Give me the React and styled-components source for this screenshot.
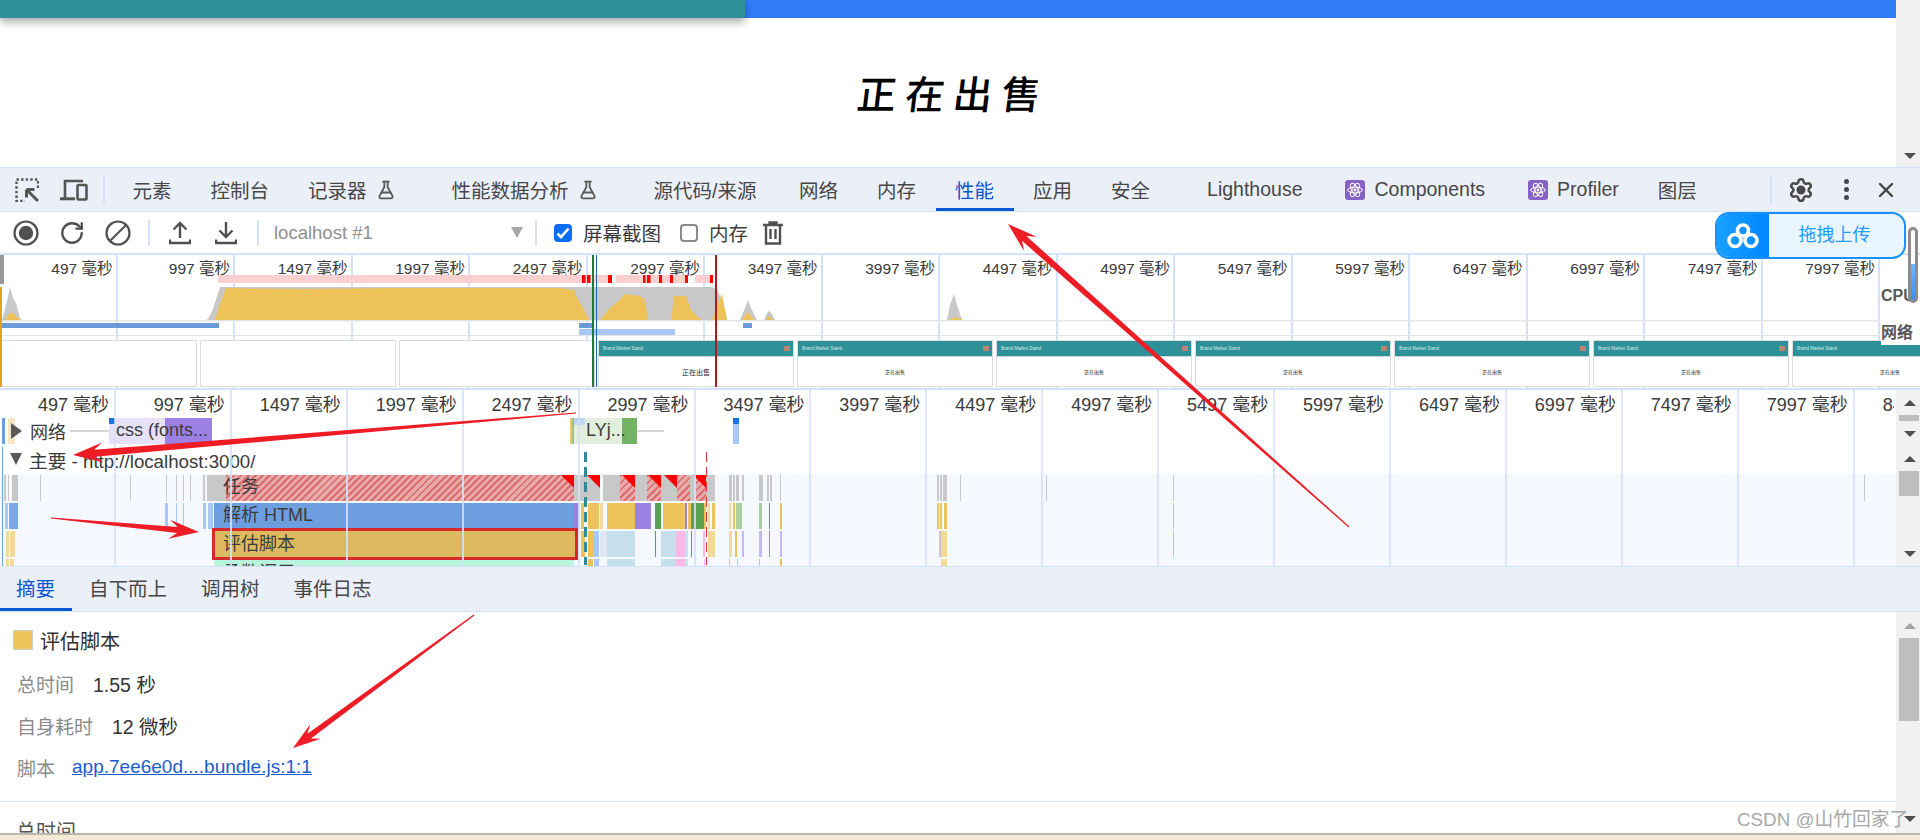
import React from "react";
import styled, { createGlobalStyle } from "styled-components";
import { Settings, FlaskConical, RotateCw, X } from "lucide-react";

const SANS = `"Liberation Sans", "Noto Sans CJK SC", sans-serif`;
const BLUE = "#0b57d0";
const LINE = "#d3e2fb";
const INK = "#474747";

const GlobalStyle = createGlobalStyle`
  html, body { margin: 0; padding: 0; background: #fff; }
  body { font-family: ${SANS}; color: ${INK}; }
  * { box-sizing: border-box; }
`;

const MAIN_TABS = [
  { label: "元素" },
  { label: "控制台" },
  { label: "记录器", flask: true, extra: 17 },
  { label: "性能数据分析", flask: true, extra: 17 },
  { label: "源代码/来源", extra: 3.5 },
  { label: "网络" },
  { label: "内存" },
  { label: "性能", active: true },
  { label: "应用" },
  { label: "安全", extra: 18 },
  { label: "Lighthouse" },
  { label: "Components", react: true },
  { label: "Profiler", react: true },
  { label: "图层" },
];

const OVERVIEW_TICKS = Array.from({ length: 16 }, (_, i) => `${497 + i * 500} 毫秒`);
const TIMELINE_TICKS = Array.from({ length: 17 }, (_, i) => `${497 + i * 500} 毫秒`);

const GREY = "#c8c8c8";
const YEL = "#edc258";
const PALE = "#f3d998";
const PUR = "#9d80e4";
const GRN = "#5da050";
const LGRN = "#a9d09c";
const SKY = "#c5dfeb";
const LBL = "#a8c7f5";
const PNK = "#f8b8e8";
const LAV = "#c4b6ee";
const HATCH = "hatch";

const TASK_BITS = [
  [4, 2, GREY], [8, 1, GREY], [12, 6, GREY], [40, 1, GREY], [130, 1, GREY], [166, 1, GREY], [176, 1, GREY],
  [183, 1, GREY], [190, 1, GREY], [203, 2, GREY], [207, 6, GREY], [213, 13, GREY], [574, 14, GREY],
  [588, 12, GREY], [603, 17, GREY], [620, 15, HATCH], [635, 12, GREY], [647, 14, HATCH], [661, 16, GREY],
  [677, 13, HATCH], [690, 6, GREY], [696, 10, HATCH], [706, 9, GREY], [729, 3, GREY], [733, 2, GREY],
  [736, 3, GREY], [742, 2, GREY], [759, 4, GREY], [767, 2, GREY], [770, 2, GREY], [780, 1, GREY],
  [937, 2, GREY], [940, 2, GREY], [943, 4, GREY], [960, 1, GREY], [1046, 1, GREY], [1173, 1, GREY], [1864, 1, GREY],
];
const TASK_FLAGS = [561, 587, 622, 648, 664, 693];

const PARSE_BITS = [
  [5, 3, LBL], [9, 9, "#7ba7e6"], [165, 3, LBL], [176, 1, LBL], [183, 1, LBL], [203, 3, LBL], [208, 5, LBL],
  [574, 5, PUR], [581, 3, YEL], [588, 11, YEL], [600, 3, PALE], [607, 28, YEL], [635, 16, PUR], [655, 6, GRN],
  [663, 22, YEL], [685, 2, PUR], [688, 3, YEL], [691, 13, GRN], [704, 2, YEL], [708, 2, PALE], [712, 3, YEL],
  [729, 2, PALE], [733, 2, YEL], [736, 6, LGRN], [759, 3, LGRN], [769, 1, GRN], [780, 2, YEL],
  [937, 2, YEL], [940, 2, YEL], [944, 3, YEL], [1173, 1, YEL],
];

const EVAL_BITS = [
  [6, 3, PALE], [10, 5, PALE], [581, 4, YEL], [588, 5, YEL], [593, 6, LBL], [600, 7, "#dfe9f6"], [607, 28, SKY],
  [655, 1, GRN], [661, 15, SKY], [676, 9, PNK], [685, 3, SKY], [691, 1, GRN], [703, 2, PNK], [708, 7, PALE],
  [729, 3, PALE], [735, 2, YEL], [742, 2, LAV], [759, 3, LAV], [769, 1, PUR], [780, 2, LAV],
  [939, 2, GREY], [941, 6, PALE], [1173, 1, YEL],
];

const CALL_BITS = [
  [6, 3, PALE], [10, 4, PALE], [588, 5, YEL], [594, 5, LBL], [607, 28, SKY], [661, 15, SKY], [676, 9, PNK],
  [685, 3, SKY], [704, 1, PNK], [729, 1, YEL], [737, 1, LBL], [759, 1, LBL], [780, 2, YEL], [941, 6, PALE],
];

const App = () => (
  <>
    <GlobalStyle />
    <Page>
      <Site>
        <SiteBody>
          <SiteHeader>
            <SiteHeaderBrand />
            <SiteHeaderRest />
          </SiteHeader>
          <SiteTitle>正在出售</SiteTitle>
        </SiteBody>
        <Scrollbar $pad={8}>
          <ArrowSlot />
          <Arrow $down />
        </Scrollbar>
      </Site>

      <TabBar>
        <TabIcon>
          <InspectIcon />
        </TabIcon>
        <TabIcon $left={21}>
          <DeviceIcon />
        </TabIcon>
        <BarDivider $left={15} $right={8} />
        {MAIN_TABS.map((tab) => (
          <MainTab key={tab.label} $active={tab.active} $extra={tab.extra}>
            {tab.react && <ReactBadge />}
            {tab.label}
            {tab.flask && <FlaskConical size={20} strokeWidth={2.2} color="#5a5a5a" />}
          </MainTab>
        ))}
        <BarTools>
          <BarDivider $left={0} $right={16} />
          <GearWrap>
            <Settings size={26} strokeWidth={2.3} />
          </GearWrap>
          <MenuDots>
            <i />
            <i />
            <i />
          </MenuDots>
          <CloseWrap>
            <X size={24} strokeWidth={2.4} />
          </CloseWrap>
        </BarTools>
      </TabBar>

      <Toolbar>
        <ToolButton>
          <RecordIcon />
        </ToolButton>
        <ToolButton>
          <RotateCw size={26} strokeWidth={2.1} />
        </ToolButton>
        <ToolButton>
          <BlockIcon />
        </ToolButton>
        <ToolDivider $left={7} $right={7} />
        <ToolButton>
          <UploadIcon />
        </ToolButton>
        <ToolButton>
          <DownloadIcon />
        </ToolButton>
        <ToolDivider $left={8} $right={0} />
        <TargetSelect>
          localhost #1
          <SelectCaret />
        </TargetSelect>
        <ToolDivider $left={0} $right={17} />
        <CheckBox $checked>
          <svg width="14" height="12" viewBox="0 0 14 12">
            <path d="M1.5 6.5 5 10l7.5-8.5" fill="none" stroke="#fff" strokeWidth="2.6" />
          </svg>
        </CheckBox>
        <CheckLabel>屏幕截图</CheckLabel>
        <CheckBox />
        <CheckLabel>内存</CheckLabel>
        <TrashIcon />
      </Toolbar>

      <Overview>
        <OverviewGrid>
          {OVERVIEW_TICKS.map((tick) => (
            <OverviewCell key={tick}>{tick}</OverviewCell>
          ))}
        </OverviewGrid>
        <OverviewChart />
        <FilmStrip>
          <Frame />
          <Frame />
          <Frame />
          <ShotFrame size={7} />
          {[1, 2, 3, 4, 5, 6].map((n) => (
            <ShotFrame key={n} size={5} />
          ))}
        </FilmStrip>
        <Marker $x={0} $w={4} $top={0} $bottom={104} $color="#999" />
        <Marker $x={0} $w={2} $top={32} $bottom={1} $color="#e8a020" />
        <Marker $x={592} $w={2} $top={0} $bottom={1} $color="#1c7a3a" />
        <Marker $x={596} $w={1} $top={0} $bottom={1} $color="#1a66c8" />
        <Marker $x={715} $w={2} $top={0} $bottom={1} $color="#b01c1c" />
        <SideLabel $top={29}>CPU</SideLabel>
        <SideLabel $top={66}>网络</SideLabel>
      </Overview>

      <Timeline>
        <TimelineBody>
          <TimelineGrid>
            {TIMELINE_TICKS.map((tick) => (
              <TimelineCell key={tick}>{tick}</TimelineCell>
            ))}
          </TimelineGrid>
          <NetworkTrack>
            <NetBar $x={2} $w={3} $color="#6d9fe0" />
            <NetBar $x={8} $w={7} $color="#f5e6c4" />
            <TrackHead>
              <TriRight />
              网络
            </TrackHead>
            <Whisker $x={70} $w={39} />
            <RequestBar $x={109} $w={103} $fill="#e6e0f8" $rest={PUR} $split={56}>
              <ReqCorner $color="#1a73e8" />
              css (fonts...
            </RequestBar>
            <RequestBar $x={570} $w={67} $fill="#e2efdd" $rest="#74b265" $split={52}>
              <ReqCorner $color="#bcd6f3" $wide />
              <ReqEdge />
              LYj...
            </RequestBar>
            <Whisker $x={637} $w={27} />
            <NetBar $x={733} $w={6} $color="#a9c8f3">
              <ReqCorner $color="#1a73e8" />
            </NetBar>
          </NetworkTrack>
          <MainHead>
            <TriDown />
            主要 - http://localhost:3000/
          </MainHead>
          <Flame>
            <FlameRow>
              <Bits items={TASK_BITS} />
              <FlameBlock $x={226} $w={348} $hatch>任务</FlameBlock>
              {TASK_FLAGS.map((x) => (
                <LongTaskFlag key={x} style={{ left: x }} />
              ))}
            </FlameRow>
            <FlameRow>
              <Bits items={PARSE_BITS} />
              <FlameBlock $x={214} $w={360} $color="#6d9fe0">解析 HTML</FlameBlock>
            </FlameRow>
            <FlameRow>
              <Bits items={EVAL_BITS} />
              <SelectedBlock>评估脚本</SelectedBlock>
            </FlameRow>
            <FlameRow $clip>
              <Bits items={CALL_BITS} />
              <FlameBlock $x={214} $w={360} $color="#b8f5dc" $low>函数调用</FlameBlock>
            </FlameRow>
          </Flame>
          <DashLine $x={584} $w={3} $color="#2e8a9a" />
          <DashLine $x={706} $w={1} $color="#e0343c" />
          <MainEdge />
        </TimelineBody>
        <TimelineBars>
          <Scrollbar $pad={10} $height={57}>
            <Arrow />
            <Track $offset={9}>
              <Thumb $h={6} />
            </Track>
            <Arrow $down />
          </Scrollbar>
          <Scrollbar $pad={9} $height={119}>
            <Arrow />
            <Track $offset={9}>
              <Thumb $h={25} />
            </Track>
            <Arrow $down />
          </Scrollbar>
        </TimelineBars>
      </Timeline>

      <DetailTabs>
        <DetailTab $active>摘要</DetailTab>
        <DetailTab>自下而上</DetailTab>
        <DetailTab>调用树</DetailTab>
        <DetailTab>事件日志</DetailTab>
      </DetailTabs>

      <Detail>
        <DetailBody>
          <EventTitle>
            <Swatch />
            评估脚本
          </EventTitle>
          <InfoRow>
            <InfoLabel>总时间</InfoLabel>
            1.55 秒
          </InfoRow>
          <InfoRow>
            <InfoLabel>自身耗时</InfoLabel>
            12 微秒
          </InfoRow>
          <InfoRow>
            <InfoLabel $tight>脚本</InfoLabel>
            <ScriptLink href="#script">app.7ee6e0d....bundle.js:1:1</ScriptLink>
          </InfoRow>
          <DetailRule />
          <NextHeading>总时间</NextHeading>
        </DetailBody>
        <Scrollbar $pad={11}>
          <Arrow $faded />
          <Track $offset={9}>
            <Thumb $h={83} />
          </Track>
          <Arrow $down />
        </Scrollbar>
      </Detail>

      <WindowEdge />

      <UploadBadge>
        <UploadLogo>
          <svg width="32" height="26" viewBox="0 0 32 26">
            <g fill="none" stroke="#fff" strokeWidth="3.6">
              <circle cx="16" cy="7.5" r="5.5" />
              <circle cx="8" cy="17.5" r="6" />
              <circle cx="24" cy="17.5" r="6" />
            </g>
          </svg>
        </UploadLogo>
        <UploadText>拖拽上传</UploadText>
      </UploadBadge>
      <SidePill />
      <Annotations />
      <Watermark>CSDN @山竹回家了</Watermark>
    </Page>
  </>
);

export default App;

const Bits = ({ items }) =>
  items.map(([x, w, color]) =>
    color === HATCH ? (
      <HatchBit key={x} style={{ left: x, width: w }} />
    ) : (
      <Bit key={x} style={{ left: x, width: w, background: color }} />
    ),
  );

const InspectIcon = () => (
  <svg width="24" height="24" viewBox="0 0 24 24" fill="none" stroke="#555">
    <path d="M23 10V1.5H1.5V23H10" strokeWidth="2.4" strokeDasharray="2.4 2.2" />
    <path d="M11.5 11.5 23 23M11.5 11.5h8M11.5 11.5v8" strokeWidth="3" />
  </svg>
);

const DeviceIcon = () => (
  <svg width="28" height="22" viewBox="0 0 28 22" fill="none" stroke="#555">
    <path d="M5 20V2h18" strokeWidth="2.6" />
    <path d="M0 19.8h15" strokeWidth="3" />
    <rect x="17.5" y="6" width="9" height="14.5" rx="1" strokeWidth="2.6" />
  </svg>
);

const RecordIcon = () => (
  <svg width="26" height="26" viewBox="0 0 26 26">
    <circle cx="13" cy="13" r="11.5" fill="none" stroke="#505050" strokeWidth="2.2" />
    <circle cx="13" cy="13" r="7.2" fill="#505050" />
  </svg>
);

const BlockIcon = () => (
  <svg width="26" height="26" viewBox="0 0 26 26" fill="none" stroke="#505050" strokeWidth="2.2">
    <circle cx="13" cy="13" r="11.5" />
    <path d="M5 21 21 5" />
  </svg>
);

const UploadIcon = () => (
  <svg width="22" height="24" viewBox="0 0 22 24" fill="none" stroke="#505050" strokeWidth="2.4">
    <path d="M11 17V2M4.5 8.5 11 2l6.5 6.5M1 18.5V22h20v-3.5" />
  </svg>
);

const DownloadIcon = () => (
  <svg width="22" height="24" viewBox="0 0 22 24" fill="none" stroke="#505050" strokeWidth="2.4">
    <path d="M11 1v15M4.5 9.5 11 16l6.5-6.5M1 18.5V22h20v-3.5" />
  </svg>
);

const TrashIcon = () => (
  <TrashWrap>
    <svg width="20" height="24" viewBox="0 0 20 24" fill="none" stroke="#505050" strokeWidth="2.4">
      <path d="M0 4h20M6.5 4V1.5h7V4M3 4v18.5h14V4M7.5 8v10M12.5 8v10" />
    </svg>
  </TrashWrap>
);

const ReactBadge = () => (
  <BadgeBox>
    <svg width="16" height="16" viewBox="-12 -12 24 24" fill="none" stroke="#fff" strokeWidth="1.5">
      <circle r="2.2" fill="#fff" stroke="none" />
      <ellipse rx="11" ry="4.4" />
      <ellipse rx="11" ry="4.4" transform="rotate(60)" />
      <ellipse rx="11" ry="4.4" transform="rotate(120)" />
    </svg>
  </BadgeBox>
);

const OverviewChart = () => (
  <ChartSvg viewBox="0 275 1920 65" width="1920" height="65">
    <g fill="#f9cfcf">
      <rect x="218" y="275" width="373" height="8" />
      <rect x="594" y="275" width="18" height="8" />
      <rect x="616" y="275" width="69" height="8" />
      <rect x="695" y="275" width="18" height="8" />
    </g>
    <g fill="#f00">
      {[[582, 3.5], [587, 3.5], [608, 4], [643, 2.5], [647, 3.5], [659, 3], [670, 3], [685, 3], [710, 3]].map(([x, w]) => (
        <rect key={x} x={x} y="275" width={w} height="8" />
      ))}
    </g>
    <g fill="#c8c8c8">
      <polygon points="2,320 6,305 10,287 13,298 16,303 20,318 22,320" />
      <polygon points="207,320 212,312 220,287 712,287 717,290 722,300 727,320" />
      <polygon points="740,320 745,308 748,300 751,308 757,320" />
      <polygon points="764,320 767,313 769,311 772,314 775,320" />
      <polygon points="947,320 950,305 954,294 957,305 962,320" />
    </g>
    <g fill="#edc258">
      <polygon points="5,320 9,314 13,313 20,320" />
      <polygon points="215,320 220,304 226,288 300,289 400,288 500,288 560,288 574,290 578,300 582,306 589,320" />
      <polygon points="600,320 610,308 620,300 624,294 640,296 645,300 648,320" />
      <polygon points="671,320 674,296 686,296 691,310 699,318 701,320" />
      <polygon points="712,320 717,305 722,294 727,320" />
      <polygon points="742,320 748,312 754,320" />
      <polygon points="766,320 769,316 773,320" />
      <polygon points="949,320 955,317 964,320" />
    </g>
    <rect x="0" y="320" width="1880" height="1.5" fill="#e4e4e4" />
    <rect x="0" y="335" width="1880" height="1" fill="#e4e4e4" />
    <g fill="#6b9ad8">
      <rect x="2" y="323" width="217" height="5" />
      <rect x="579" y="323" width="14" height="5" />
      <rect x="743" y="323" width="9" height="5" />
    </g>
    <rect x="579" y="329" width="96" height="6" fill="#a8c7f5" />
  </ChartSvg>
);

const ShotFrame = ({ size }) => (
  <Frame>
    <ShotHeader>
      Brand Market Stand
      <ShotBadge />
    </ShotHeader>
    <ShotText $size={size}>正在出售</ShotText>
  </Frame>
);

const arrowPoints = ([x1, y1], [x2, y2], headL, headW, neckW) => {
  const len = Math.hypot(x2 - x1, y2 - y1);
  const dx = (x2 - x1) / len;
  const dy = (y2 - y1) / len;
  const at = (back, side) => `${x2 - dx * back - dy * side},${y2 - dy * back + dx * side}`;
  return [
    at(len, 0.6), at(headL * 0.72, neckW / 2), at(headL, headW / 2), at(0, 0),
    at(headL, -headW / 2), at(headL * 0.72, -neckW / 2), at(len, -0.6),
  ].join(" ");
};

const Annotations = () => (
  <AnnotationLayer width="1920" height="840" viewBox="0 0 1920 840">
    <g fill="#ee1c25">
      <polygon points={arrowPoints([1349, 527], [1008, 224], 30, 19, 6.5)} />
      <polygon points={arrowPoints([576, 413], [73, 455], 30, 20, 7)} />
      <polygon points={arrowPoints([51, 518], [199, 532], 30, 19, 6)} />
      <polygon points={arrowPoints([474, 615], [293, 748], 28, 18, 6)} />
    </g>
  </AnnotationLayer>
);

const Page = styled.div`
  position: relative;
  width: 1920px;
  height: 840px;
  overflow: hidden;
  display: flex;
  flex-direction: column;
`;

const Site = styled.div`
  height: 167px;
  display: flex;
  flex: none;
`;

const SiteBody = styled.div`
  flex: 1;
  position: relative;
`;

const SiteHeader = styled.div`
  display: flex;
  height: 18px;
`;

const SiteHeaderBrand = styled.div`
  width: 745px;
  background: #2e9199;
  box-shadow: 0 4px 8px rgba(0, 0, 0, 0.35);
  position: relative;
  z-index: 1;
`;

const SiteHeaderRest = styled.div`
  flex: 1;
  background: #2f7cf6;
`;

const SiteTitle = styled.h1`
  margin: 51px 0 0 855px;
  font: 500 39px/46px "Noto Sans CJK SC", sans-serif;
  letter-spacing: 9px;
  color: #000;
  transform: skewX(-7deg);
  transform-origin: left bottom;
  white-space: nowrap;
`;

const Scrollbar = styled.div`
  width: 24px;
  flex: none;
  height: ${(p) => (p.$height ? `${p.$height}px` : "auto")};
  background: #f1f1f1;
  display: flex;
  flex-direction: column;
  align-items: center;
  padding: ${(p) => p.$pad}px 0;
`;

const ArrowSlot = styled.div`
  flex: 1;
`;

const Arrow = styled.div`
  flex: none;
  width: 0;
  height: 0;
  margin-left: 3px;
  border-left: 6px solid transparent;
  border-right: 6px solid transparent;
  ${(p) =>
    p.$down
      ? `border-top: 6px solid #505050;`
      : `border-bottom: 6px solid ${p.$faded ? "#a3a3a3" : "#505050"};`}
`;

const Track = styled.div`
  flex: 1;
  align-self: stretch;
  padding: ${(p) => p.$offset}px 1px 0 3px;
`;

const Thumb = styled.div`
  height: ${(p) => p.$h}px;
  background: #bebebe;
`;

const TabBar = styled.div`
  height: 45px;
  flex: none;
  display: flex;
  align-items: center;
  background: #ebeff7;
  border-top: 1px solid #d3e2fb;
  border-bottom: 1px solid #d3e2fb;
  padding-left: 15px;
`;

const TabIcon = styled.div`
  display: flex;
  margin-left: ${(p) => p.$left || 0}px;
`;

const BarDivider = styled.div`
  width: 2px;
  height: 27px;
  background: ${LINE};
  margin: 0 ${(p) => p.$right}px 0 ${(p) => p.$left}px;
`;

const MainTab = styled.div`
  height: 43px;
  display: flex;
  align-items: center;
  gap: 9px;
  padding: 3px 19.5px 0;
  margin-right: ${(p) => p.$extra || 0}px;
  font-size: 19.5px;
  white-space: nowrap;
  color: ${(p) => (p.$active ? BLUE : INK)};
  border-bottom: 3px solid ${(p) => (p.$active ? BLUE : "transparent")};
`;

const BadgeBox = styled.span`
  width: 20px;
  height: 20px;
  margin-left: 4px;
  border-radius: 3px;
  background: #8561c5;
  display: flex;
  align-items: center;
  justify-content: center;
`;

const BarTools = styled.div`
  margin-left: auto;
  width: 150px;
  flex: none;
  display: flex;
  align-items: center;
  color: ${INK};
`;

const GearWrap = styled.div`
  display: flex;
  svg circle {
    fill: currentColor;
  }
`;

const MenuDots = styled.div`
  margin-left: 30px;
  display: flex;
  flex-direction: column;
  gap: 3px;
  i {
    width: 5px;
    height: 5px;
    border-radius: 50%;
    background: ${INK};
  }
`;

const CloseWrap = styled.div`
  margin-left: 25px;
  display: flex;
`;

const Toolbar = styled.div`
  height: 43px;
  flex: none;
  display: flex;
  align-items: center;
  padding-left: 3px;
  background: #fff;
  border-bottom: 2px solid #d3e2fb;
  color: #505050;
  font-size: 19px;
`;

const ToolButton = styled.div`
  width: 46px;
  display: flex;
  justify-content: center;
`;

const ToolDivider = styled.div`
  width: 2px;
  height: 26px;
  background: ${LINE};
  margin: 0 ${(p) => p.$right}px 0 ${(p) => p.$left}px;
`;

const TargetSelect = styled.div`
  width: 276px;
  padding-left: 15px;
  display: flex;
  align-items: center;
  justify-content: space-between;
  padding-right: 12px;
  color: #8f8f8f;
  font-size: 18.5px;
`;

const SelectCaret = styled.span`
  width: 0;
  height: 0;
  border-left: 6.5px solid transparent;
  border-right: 6.5px solid transparent;
  border-top: 11px solid #a8a8a8;
`;

const CheckBox = styled.span`
  width: 18px;
  height: 18px;
  border-radius: 4px;
  display: flex;
  align-items: center;
  justify-content: center;
  background: ${(p) => (p.$checked ? "#0b6ef5" : "#fff")};
  border: ${(p) => (p.$checked ? "none" : "2px solid #8a8a8a")};
`;

const CheckLabel = styled.span`
  margin: 0 19px 0 11px;
  font-size: 19.5px;
  color: #3c3c3c;
`;

const TrashWrap = styled.span`
  display: flex;
  margin-left: -4px;
`;

const Overview = styled.div`
  position: relative;
  height: 135px;
  flex: none;
  overflow: hidden;
  border-bottom: 2px solid #d3e2fb;
  background: #fff;
`;

const OverviewGrid = styled.div`
  position: absolute;
  inset: 0;
  display: flex;
`;

const OverviewCell = styled.div`
  flex: 0 0 117.5px;
  border-right: 2px solid ${LINE};
  padding: 3px 3px 0 0;
  text-align: right;
  font-size: 15.5px;
  line-height: 22px;
  color: #3a3a3a;
  white-space: nowrap;
`;

const ChartSvg = styled.svg`
  display: block;
  position: relative;
  margin-top: 20px;
`;

const FilmStrip = styled.div`
  position: relative;
  display: flex;
  gap: 3px;
  padding-left: 1px;
  height: 47px;
`;

const Frame = styled.div`
  flex: 0 0 196px;
  border: 1px solid #dcdcdc;
  border-radius: 1px;
  background: #fff;
  overflow: hidden;
  display: flex;
  flex-direction: column;
`;

const ShotHeader = styled.div`
  height: 16px;
  flex: none;
  display: flex;
  align-items: center;
  justify-content: space-between;
  padding: 0 3px 0 4px;
  background: #2e9199;
  color: #d9ecec;
  font-size: 4.5px;
  border-bottom: 1px solid #c9dcdc;
`;

const ShotBadge = styled.span`
  width: 6px;
  height: 5px;
  background: #b98470;
`;

const ShotText = styled.div`
  flex: 1;
  display: flex;
  align-items: center;
  justify-content: center;
  color: #222;
  font: ${(p) => p.$size}px "Noto Sans CJK SC", sans-serif;
`;

const Marker = styled.div`
  position: absolute;
  left: ${(p) => p.$x}px;
  width: ${(p) => p.$w}px;
  top: ${(p) => p.$top}px;
  bottom: ${(p) => p.$bottom}px;
  background: ${(p) => p.$color};
`;

const SideLabel = styled.div`
  position: absolute;
  left: 1881px;
  top: ${(p) => p.$top}px;
  width: 39px;
  height: 24px;
  line-height: 24px;
  background: #fff;
  color: #585858;
  font-size: 16px;
  font-weight: 700;
`;

const Timeline = styled.div`
  height: 176px;
  flex: none;
  display: flex;
`;

const TimelineBody = styled.div`
  position: relative;
  flex: 1;
  overflow: hidden;
  padding-top: 25px;
  background: #fff;
`;

const TimelineBars = styled.div`
  display: flex;
  flex-direction: column;
  background: #f1f1f1;
`;

const TimelineGrid = styled.div`
  position: absolute;
  inset: 0 2px 0 0;
  display: flex;
  overflow: hidden;
  z-index: 3;
  pointer-events: none;
`;

const TimelineCell = styled.div`
  flex: 0 0 115.93px;
  border-right: 2px solid rgba(211, 226, 251, 0.85);
  padding: 3px 5px 0 0;
  display: flex;
  justify-content: flex-end;
  font-size: 18px;
  line-height: 24px;
  color: #3a3a3a;
  white-space: nowrap;
`;

const NetworkTrack = styled.div`
  position: relative;
  height: 32px;
  font-size: 18px;
`;

const TrackHead = styled.div`
  position: absolute;
  left: 11px;
  top: 3px;
  display: flex;
  align-items: center;
  gap: 8px;
  height: 26px;
  color: #3a3a3a;
`;

const TriRight = styled.span`
  width: 0;
  height: 0;
  border-top: 8px solid transparent;
  border-bottom: 8px solid transparent;
  border-left: 11px solid #5a5a5a;
`;

const TriDown = styled.span`
  width: 0;
  height: 0;
  border-left: 6.5px solid transparent;
  border-right: 6.5px solid transparent;
  border-top: 12px solid #5a5a5a;
`;

const NetBar = styled.div`
  position: absolute;
  top: 3px;
  left: ${(p) => p.$x}px;
  width: ${(p) => p.$w}px;
  height: 26px;
  background: ${(p) => p.$color};
`;

const Whisker = styled.div`
  position: absolute;
  top: 15px;
  left: ${(p) => p.$x}px;
  width: ${(p) => p.$w}px;
  height: 2px;
  background: #d6d6d6;
`;

const RequestBar = styled.div`
  position: absolute;
  top: 3px;
  left: ${(p) => p.$x}px;
  width: ${(p) => p.$w}px;
  height: 26px;
  padding-left: ${(p) => (p.$x > 300 ? 16 : 7)}px;
  line-height: 25px;
  color: #3d3d3d;
  white-space: nowrap;
  overflow: hidden;
  background: linear-gradient(
    90deg,
    ${(p) => p.$fill} ${(p) => p.$split}px,
    ${(p) => p.$rest} ${(p) => p.$split}px
  );
`;

const ReqCorner = styled.span`
  position: absolute;
  left: ${(p) => (p.$wide ? 3 : 0)}px;
  top: 0;
  width: ${(p) => (p.$wide ? 12 : 6)}px;
  height: ${(p) => (p.$wide ? 7 : 6)}px;
  background: ${(p) => p.$color};
`;

const ReqEdge = styled.span`
  position: absolute;
  left: 0;
  top: 0;
  bottom: 0;
  width: 4px;
  background: linear-gradient(90deg, #e8c877 0 2px, #9cc27f 2px);
`;

const MainHead = styled.div`
  height: 27px;
  display: flex;
  align-items: center;
  gap: 7px;
  padding: 0 0 3px 10px;
  font-size: 18.7px;
  color: #3a3a3a;
`;

const Flame = styled.div`
  height: 92px;
  padding-top: 1px;
  overflow: hidden;
  background: #f5f8fe;
`;

const FlameRow = styled.div`
  position: relative;
  height: ${(p) => (p.$clip ? 7 : 26)}px;
  margin-bottom: 2px;
  overflow: ${(p) => (p.$clip ? "hidden" : "visible")};
`;

const Bit = styled.span`
  position: absolute;
  top: 0;
  bottom: 0;
`;

const hatchBg = `repeating-linear-gradient(
  135deg,
  #dd6c6c 0 2px,
  #e6aaaa 2px 5px
)`;

const HatchBit = styled(Bit)`
  background: ${hatchBg};
`;

const FlameBlock = styled.div`
  position: absolute;
  top: 0;
  left: ${(p) => p.$x}px;
  width: ${(p) => p.$w}px;
  height: 26px;
  padding-left: ${(p) => (p.$hatch ? 0 : 9)}px;
  text-indent: ${(p) => (p.$hatch ? -3 : 0)}px;
  background: ${(p) => (p.$hatch ? hatchBg : p.$color)};
  color: #3c3c3c;
  font-size: 18px;
  line-height: ${(p) => (p.$low ? 29 : 25)}px;
  white-space: nowrap;
`;

const LongTaskFlag = styled.span`
  position: absolute;
  top: 0;
  width: 13px;
  height: 13px;
  background: #f00;
  clip-path: polygon(0 0, 100% 0, 100% 100%);
`;

const SelectedBlock = styled.div`
  position: absolute;
  left: 212px;
  top: -3px;
  width: 366px;
  height: 32px;
  border: 3px solid #d42a2a;
  background: #ddb95f;
  padding-left: 8px;
  color: #3c3c3c;
  font-size: 18px;
  line-height: 26px;
  z-index: 2;
`;

const DashLine = styled.div`
  position: absolute;
  left: ${(p) => p.$x}px;
  width: ${(p) => p.$w}px;
  top: 62px;
  bottom: 1px;
  z-index: 2;
  background: repeating-linear-gradient(
    180deg,
    ${(p) => p.$color} 0 10px,
    transparent 10px 15px
  );
`;

const MainEdge = styled.div`
  position: absolute;
  left: 2px;
  top: 57px;
  bottom: 0;
  width: 1px;
  background: #6d9fe0;
`;

const DetailTabs = styled.div`
  height: 46px;
  flex: none;
  display: flex;
  background: #ebeff7;
  border-top: 1px solid #d3e2fb;
  border-bottom: 1px solid #d3e2fb;
`;

const DetailTab = styled.div`
  padding: 2px 17px 0;
  font-size: 19.5px;
  line-height: 40px;
  color: ${(p) => (p.$active ? BLUE : INK)};
  border-bottom: 3px solid ${(p) => (p.$active ? BLUE : "transparent")};
  &:first-child {
    padding-left: 16px;
  }
`;

const Detail = styled.div`
  height: 221px;
  flex: none;
  display: flex;
`;

const DetailBody = styled.div`
  flex: 1;
  overflow: hidden;
  padding-top: 18px;
`;

const EventTitle = styled.div`
  display: flex;
  align-items: center;
  gap: 7px;
  height: 20px;
  padding-left: 13px;
  margin-bottom: 12px;
  font-size: 20px;
  color: #303030;
`;

const Swatch = styled.span`
  width: 20px;
  height: 20px;
  background: ${YEL};
  border: 1px solid #ccc;
`;

const InfoRow = styled.div`
  height: 42px;
  display: flex;
  align-items: center;
  padding-left: 17px;
  font-size: 19.5px;
  color: #333;
`;

const InfoLabel = styled.span`
  margin-right: ${(p) => (p.$tight ? 17 : 19)}px;
  font-size: 19px;
  color: #8a8a8a;
`;

const ScriptLink = styled.a`
  color: #1a5ccc;
  text-decoration: underline;
  font-size: 19px;
`;

const DetailRule = styled.div`
  height: 1px;
  background: #d3e2fb;
  margin-top: 13px;
`;

const NextHeading = styled.div`
  padding-left: 16px;
  margin-top: 17px;
  font-size: 20px;
  line-height: 26px;
  color: #555;
`;

const WindowEdge = styled.div`
  height: 7px;
  flex: none;
  background: linear-gradient(180deg, #bcb8a8 0 2px, #f2ead6 2px);
`;

const UploadBadge = styled.div`
  position: absolute;
  left: 1715px;
  top: 212px;
  width: 191px;
  height: 47px;
  display: flex;
  border: 2px solid #1890ff;
  border-radius: 14px;
  overflow: hidden;
  background: #eaf6ff;
`;

const UploadLogo = styled.div`
  width: 52px;
  display: flex;
  align-items: center;
  justify-content: center;
  background: linear-gradient(90deg, #18a0ff, #0086ff);
`;

const UploadText = styled.div`
  flex: 1;
  text-align: center;
  line-height: 43px;
  font-size: 18px;
  color: #1e9bff;
  padding-right: 4px;
`;

const SidePill = styled.div`
  position: absolute;
  left: 1908px;
  top: 227px;
  width: 10px;
  height: 76px;
  border: 3px solid #8c8c8c;
  border-radius: 6px;
  background: linear-gradient(180deg, #fff 0 34px, #6fb4fb 34px, #3d8cf5);
`;

const AnnotationLayer = styled.svg`
  position: absolute;
  left: 0;
  top: 0;
  z-index: 5;
  pointer-events: none;
`;

const Watermark = styled.div`
  position: absolute;
  left: 1737px;
  top: 808px;
  z-index: 6;
  font-size: 18.8px;
  line-height: 24px;
  color: #a8a8a8;
  white-space: nowrap;
`;
